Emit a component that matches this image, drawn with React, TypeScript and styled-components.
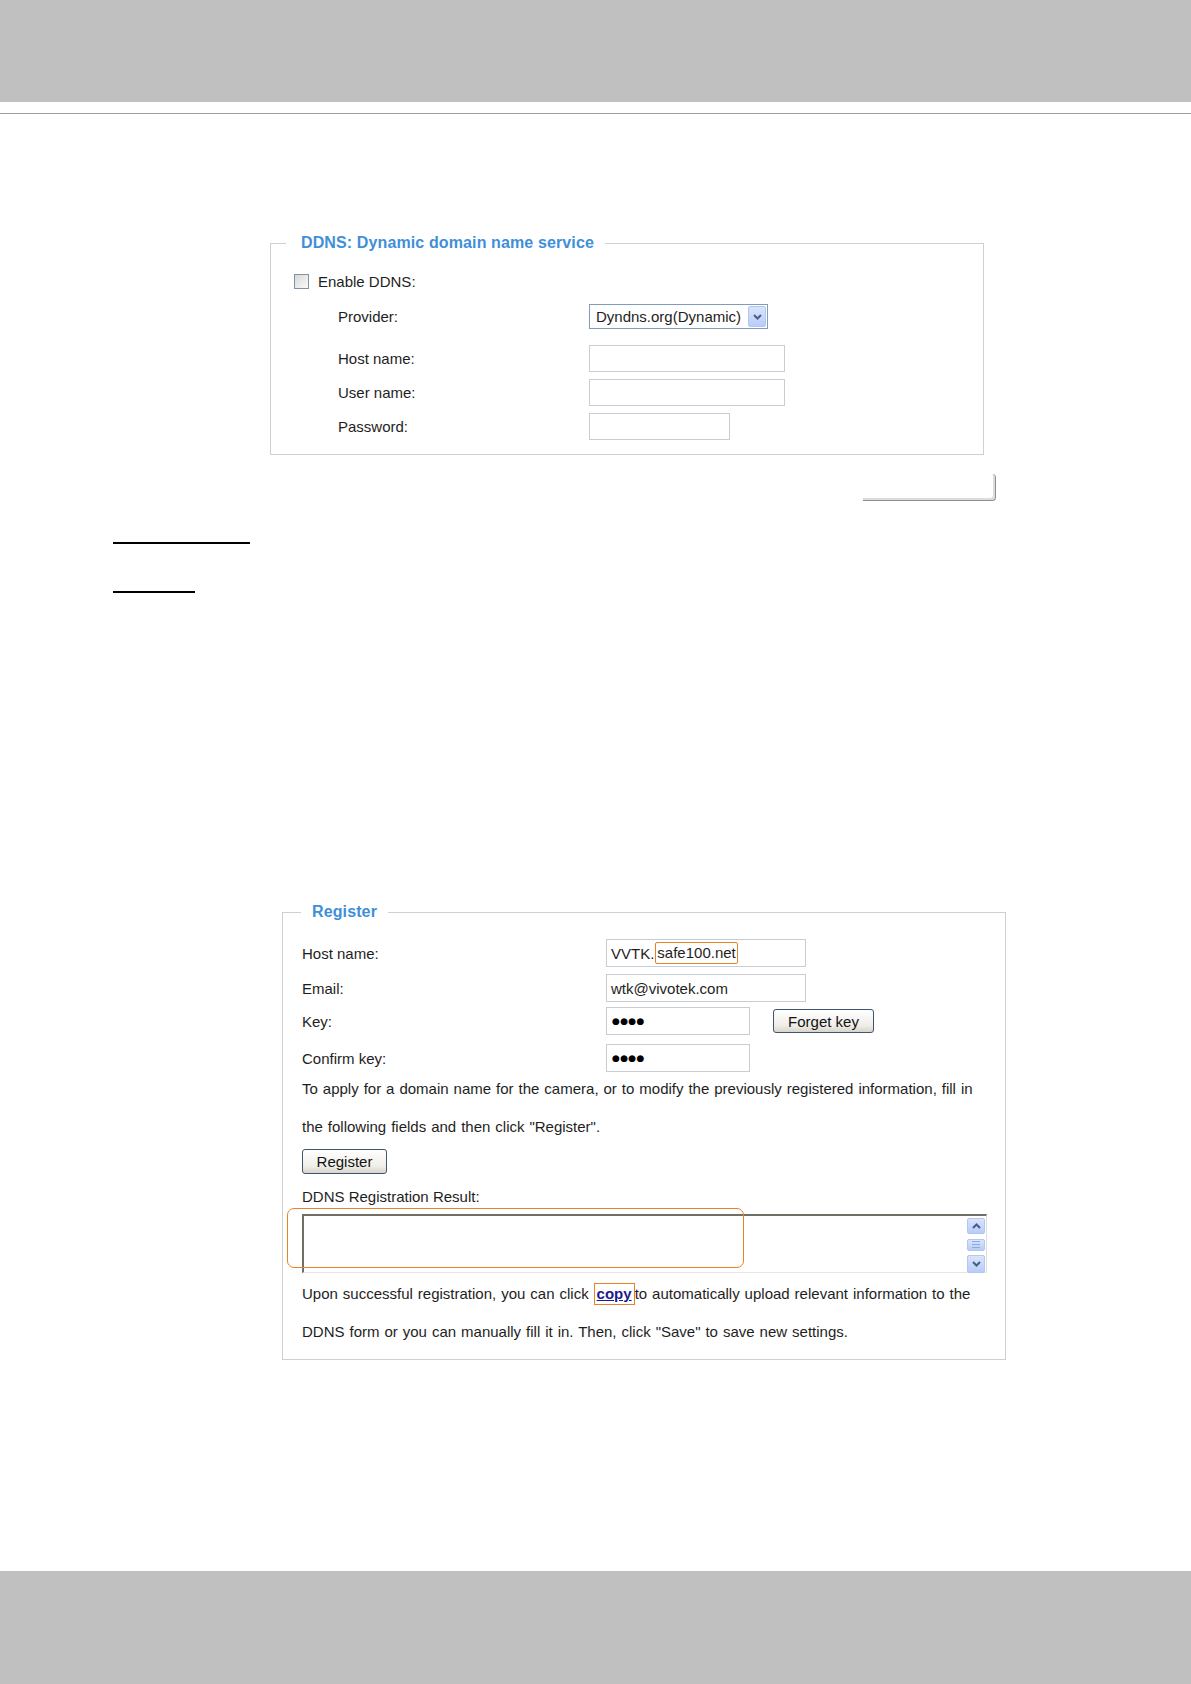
import React from "react";
import styled, { createGlobalStyle } from "styled-components";

const GlobalStyle = createGlobalStyle`
  html, body {
    margin: 0;
    padding: 0;
    background: #fff;
  }
  body {
    font-family: "Liberation Sans", Arial, sans-serif;
    color: #1e1e1e;
  }
  * {
    box-sizing: border-box;
  }
`;

const Page = styled.div`
  width: 1191px;
  height: 1684px;
  display: flex;
  flex-direction: column;
  overflow: hidden;
`;

const Band = styled.div<{ $h: number }>`
  flex: none;
  height: ${(p) => p.$h}px;
  background: #c0c0c0;
`;

const Rule = styled.div`
  flex: none;
  margin-top: 11px;
  height: 1px;
  background: #9c9c9c;
`;

const Main = styled.main`
  flex: 1;
  padding-top: 120px;
`;

const Box = styled.fieldset<{ $left: number; $width: number; $top?: number }>`
  margin: ${(p) => p.$top ?? 0}px 0 0 ${(p) => p.$left}px;
  width: ${(p) => p.$width}px;
  min-width: 0;
  padding: 0;
  border: 1px solid #d0d0d0;
`;

const Legend = styled.legend<{ $inset: number; $pad: number }>`
  margin-left: ${(p) => p.$inset}px;
  padding: 0 11px 0 ${(p) => p.$pad}px;
  font-size: 16px;
  line-height: 18px;
  font-weight: bold;
  letter-spacing: 0.12px;
  color: #3f8fd8;
`;

const Body = styled.div<{ $top: number; $bottom: number; $left: number }>`
  padding: ${(p) => p.$top}px 0 ${(p) => p.$bottom}px ${(p) => p.$left}px;
`;

const EnableRow = styled.label`
  display: flex;
  align-items: center;
  gap: 9px;
  height: 20px;
  margin-left: -44px;
  font-size: 15px;
`;

const CheckBox = styled.span`
  width: 15px;
  height: 15px;
  border: 1px solid #7f93aa;
  background: linear-gradient(135deg, #d8d8d8, #fafafa);
`;

const FieldRow = styled.div<{ $top: number; $label: number }>`
  display: grid;
  grid-template-columns: ${(p) => p.$label}px auto;
  justify-content: start;
  align-items: center;
  margin-top: ${(p) => p.$top}px;
  font-size: 15px;
`;

const Cell = styled.div`
  display: flex;
  align-items: center;
  gap: 23px;
`;

const Field = styled.div<{ $w: number; $h?: number }>`
  display: flex;
  align-items: center;
  width: ${(p) => p.$w}px;
  height: ${(p) => p.$h ?? 28}px;
  padding-left: 4px;
  border: 1px solid #c8ccd3;
  background: #fff;
  font-size: 15px;
  white-space: nowrap;
`;

const Mark = styled.span`
  display: inline-block;
  padding: 1px 1px;
  margin-left: 1px;
  border: 1.5px solid #e8822a;
  border-radius: 2px;
  line-height: 18px;
`;

const Dots = styled.span`
  padding-left: 1px;
  font-family: "DejaVu Sans", sans-serif;
  font-size: 9px;
  letter-spacing: 0.3px;
  color: #000;
`;

const Select = styled.div`
  display: flex;
  align-items: center;
  justify-content: space-between;
  width: 179px;
  height: 25px;
  padding: 0 1px 0 6px;
  border: 1px solid #7f9db9;
  font-size: 15px;
`;

const ArrowBtn = styled.span<{ $h: number }>`
  display: flex;
  align-items: center;
  justify-content: center;
  width: 18px;
  height: ${(p) => p.$h}px;
  border: 1px solid #b3c6f0;
  border-radius: 2px;
  background: linear-gradient(#d9e5fd, #b8ccf8);
`;

const SaveRow = styled.div`
  display: flex;
  justify-content: flex-end;
  margin-top: 19px;
  padding-right: 195px;
`;

const SaveEdge = styled.div`
  width: 133px;
  height: 27px;
  border-right: 1px solid #8e8e8e;
  border-bottom: 1px solid #8e8e8e;
  border-radius: 0 4px 4px 0;
  box-shadow: inset -2px -2px 0 #dcdcdc;
`;

const BlankLink = styled.span<{ $w: number; $top: number }>`
  display: block;
  width: ${(p) => p.$w}px;
  height: 2px;
  margin: ${(p) => p.$top}px 0 0 113px;
  background: #000;
`;

const Button = styled.span<{ $w: number; $h: number }>`
  display: inline-flex;
  align-items: center;
  justify-content: center;
  width: ${(p) => p.$w}px;
  height: ${(p) => p.$h}px;
  border: 1px solid #3f5574;
  border-radius: 3px;
  background: linear-gradient(#ffffff, #efeee9 70%, #d9d4ca);
  font-size: 15px;
  color: #111;
`;

const ButtonLine = styled.div`
  margin-top: 3px;
`;

const Para = styled.p<{ $top: number }>`
  margin: ${(p) => p.$top}px 0 0;
  font-size: 15px;
  line-height: 38px;
  word-spacing: 0.8px;
  white-space: nowrap;
`;

const Caption = styled.div`
  margin-top: 13px;
  font-size: 15px;
  line-height: 20px;
`;

const ResultArea = styled.div`
  position: relative;
  display: flex;
  justify-content: flex-end;
  width: 685px;
  height: 59px;
  margin-top: 7px;
  padding: 2px 1px 0 0;
  border-top: 2px solid #6f6f66;
  border-left: 2px solid #6f6f66;
  border-right: 1px solid #dedede;
  border-bottom: 1px solid #e6e6e6;
`;

const ScrollCol = styled.div`
  display: flex;
  flex-direction: column;
  justify-content: space-between;
  height: 55px;
`;

const Grip = styled.span`
  display: flex;
  flex-direction: column;
  gap: 2px;
  & > i {
    display: block;
    width: 8px;
    height: 1px;
    background: #8fa7db;
  }
`;

const Highlight = styled.span`
  position: absolute;
  left: -17px;
  top: -8px;
  width: 457px;
  height: 60px;
  border: 1.5px solid #e8822a;
  border-radius: 7px;
  pointer-events: none;
`;

const CopyMark = styled.span`
  display: inline-block;
  padding: 0 2px;
  border: 1.5px solid #e8822a;
  line-height: 20px;
  word-spacing: 0;
`;

const CopyLink = styled.a`
  font-weight: bold;
  color: #1b1b8f;
  text-decoration: underline;
`;

const Chevron = ({ up }: { up?: boolean }) => (
  <svg width="9" height="6" viewBox="0 0 9 6">
    <path
      d={up ? "M1 5 L4.5 1.5 L8 5" : "M1 1 L4.5 4.5 L8 1"}
      fill="none"
      stroke="#4a5c84"
      strokeWidth="2"
    />
  </svg>
);

export default function App() {
  return (
    <Page>
      <GlobalStyle />
      <Band $h={102} />
      <Rule />
      <Main>
        <Box $left={270} $width={714}>
          <Legend $inset={15} $pad={15}>
            DDNS: Dynamic domain name service
          </Legend>
          <Body $top={19} $bottom={14} $left={67}>
            <EnableRow>
              <CheckBox />
              Enable DDNS:
            </EnableRow>
            <FieldRow $top={13} $label={251}>
              <span>Provider:</span>
              <Select>
                Dyndns.org(Dynamic)
                <ArrowBtn $h={21}>
                  <Chevron />
                </ArrowBtn>
              </Select>
            </FieldRow>
            <FieldRow $top={16} $label={251}>
              <span>Host name:</span>
              <Field $w={196} $h={27} />
            </FieldRow>
            <FieldRow $top={7} $label={251}>
              <span>User name:</span>
              <Field $w={196} $h={27} />
            </FieldRow>
            <FieldRow $top={7} $label={251}>
              <span>Password:</span>
              <Field $w={141} $h={27} />
            </FieldRow>
          </Body>
        </Box>

        <SaveRow>
          <SaveEdge />
        </SaveRow>

        <BlankLink $w={137} $top={41} />
        <BlankLink $w={82} $top={47} />

        <Box $left={282} $width={724} $top={310}>
          <Legend $inset={18} $pad={11}>
            Register
          </Legend>
          <Body $top={18} $bottom={8} $left={19}>
            <FieldRow $top={0} $label={304}>
              <span>Host name:</span>
              <Field $w={200}>
                VVTK.<Mark>safe100.net</Mark>
              </Field>
            </FieldRow>
            <FieldRow $top={7} $label={304}>
              <span>Email:</span>
              <Field $w={200}>wtk@vivotek.com</Field>
            </FieldRow>
            <FieldRow $top={5} $label={304}>
              <span>Key:</span>
              <Cell>
                <Field $w={144}>
                  <Dots>●●●●</Dots>
                </Field>
                <Button $w={101} $h={24}>
                  Forget key
                </Button>
              </Cell>
            </FieldRow>
            <FieldRow $top={9} $label={304}>
              <span>Confirm key:</span>
              <Field $w={144}>
                <Dots>●●●●</Dots>
              </Field>
            </FieldRow>
            <Para $top={-2}>
              To apply for a domain name for the camera, or to modify the
              previously registered information, fill in
              <br />
              the following fields and then click "Register".
            </Para>
            <ButtonLine>
              <Button $w={85} $h={25}>
                Register
              </Button>
            </ButtonLine>
            <Caption>DDNS Registration Result:</Caption>
            <ResultArea>
              <Highlight />
              <ScrollCol>
                <ArrowBtn $h={16}>
                  <Chevron up />
                </ArrowBtn>
                <ArrowBtn $h={12}>
                  <Grip>
                    <i />
                    <i />
                    <i />
                  </Grip>
                </ArrowBtn>
                <ArrowBtn $h={18}>
                  <Chevron />
                </ArrowBtn>
              </ScrollCol>
            </ResultArea>
            <Para $top={2}>
              Upon successful registration, you can click{" "}
              <CopyMark>
                <CopyLink href="#">copy</CopyLink>
              </CopyMark>
              to automatically upload relevant information to the
              <br />
              DDNS form or you can manually fill it in. Then, click "Save" to
              save new settings.
            </Para>
          </Body>
        </Box>
      </Main>
      <Band $h={113} />
    </Page>
  );
}
